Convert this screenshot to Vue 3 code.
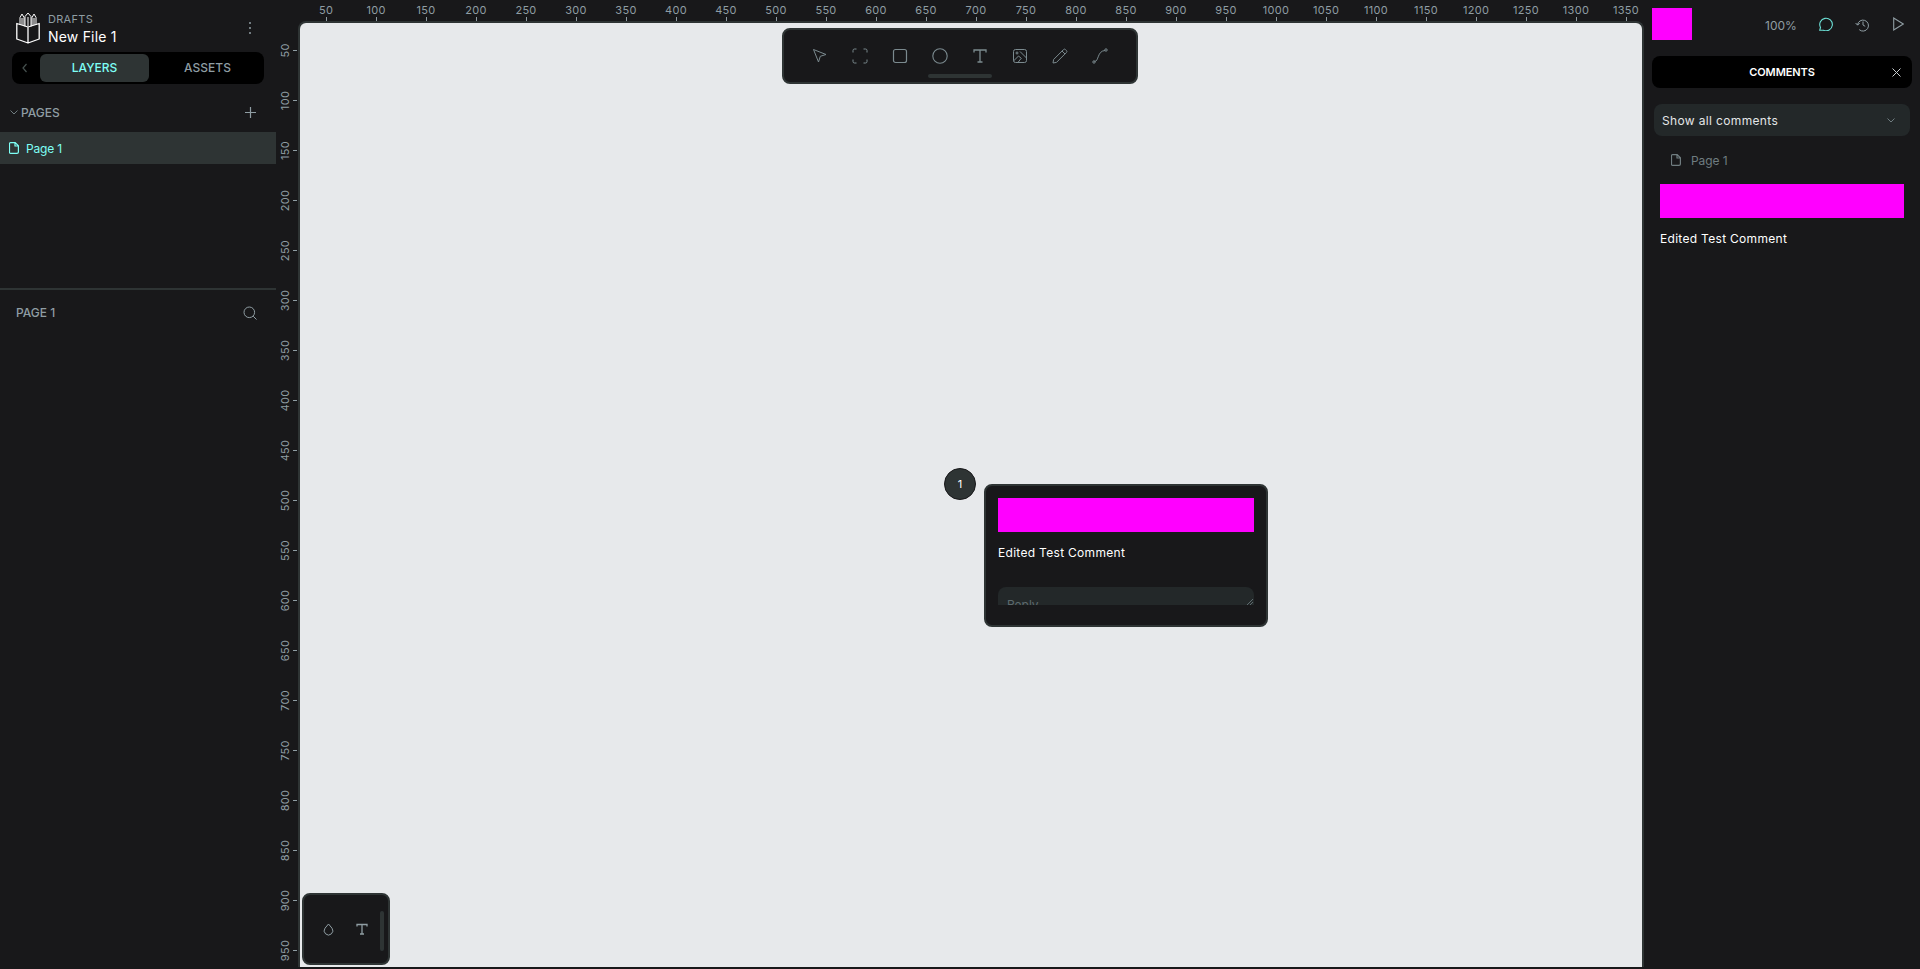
<script setup>
const hTicks = Array.from({ length: 27 }, (_, i) => (i + 1) * 50)
const vTicks = Array.from({ length: 19 }, (_, i) => (i + 1) * 50)
</script>

<template>
  <div class="app">
    <aside class="left">
      <header class="file">
        <svg class="logo" viewBox="0 0 24 32" fill="none" stroke="#fff" stroke-width="1.3" stroke-linejoin="round">
          <path d="M.8 11.500 12 15l11.200-3.500v15.500L12 31 .8 27zM12 15v16" />
          <path d="M4 13V5.500l2-3.500 2 3.500V14M9 14.500V4.500L12 1l3 3.500v10M16 14V5.500L18 2l2 3.500V13M6 6v7M12 5v9M18 6v7" stroke-width="1" />
        </svg>
        <div class="file-text">
          <div class="drafts">DRAFTS</div>
          <div class="name">New File 1</div>
        </div>
        <svg class="dots" width="4" height="14" viewBox="0 0 4 14" fill="#8f9da3">
          <circle cx="2" cy="2" r="1" /><circle cx="2" cy="7" r="1" /><circle cx="2" cy="12" r="1" />
        </svg>
      </header>
      <div class="tabs">
        <svg class="back" width="6" height="10" viewBox="0 0 6 10" fill="none" stroke="#46514f" stroke-width="1.2"><path d="M4.500 1 1 5l3.500 4" /></svg>
        <div class="tab active">LAYERS</div>
        <div class="tab assets">ASSETS</div>
      </div>
      <div class="pages-head">
        <svg width="8" height="5" viewBox="0 0 8 5" fill="none" stroke="#6f7c80"><path d="M.5.500 4 4 7.500.500" /></svg>
        <span>PAGES</span>
        <svg class="plus" width="11" height="11" viewBox="0 0 11 11" fill="none" stroke="#8f9da3" stroke-width="1.200"><path d="M5.500 0v11M0 5.500h11" /></svg>
      </div>
      <div class="page-row">
        <svg width="10" height="12" viewBox="0 0 10 12" fill="none" stroke="currentColor" stroke-width="1.200"><path d="M1.500.600h4.700l3.200 3.200v6.200a1.400 1.400 0 0 1-1.400 1.400H1.500a1 1 0 0 1-1-1V1.600a1 1 0 0 1 1-1ZM6 .600v3.400h3.400" /></svg>
        <span>Page 1</span>
      </div>
      <div class="pages-space"></div>
      <div class="layers-head">
        <span>PAGE 1</span>
        <svg width="14" height="14" viewBox="0 0 14 14" fill="none" stroke="#8f9da3"><circle cx="6.300" cy="6.300" r="5.300" /><path d="m10.200 10.200 3.300 3.300" /></svg>
      </div>
    </aside>

    <main class="stage">
      <div class="ruler-top">
        <div v-for="t in hTicks" :key="t" class="h-tick" :style="{ left: t + 'px' }">
          <span>{{ t }}</span><i></i>
        </div>
      </div>
      <div class="stage-body">
        <div class="ruler-left">
          <div v-for="t in vTicks" :key="t" class="v-tick" :style="{ top: t + 'px' }">
            <span>{{ t }}</span><i></i>
          </div>
        </div>
        <div class="canvas">
          <div class="toolbar">
            <svg viewBox="0 0 16 16" fill="none" stroke="currentColor"><path d="M1.500 1.500 14 6.500 8.300 8.300 6.500 14z" /></svg>
            <svg viewBox="0 0 16 16" fill="none" stroke="currentColor"><path d="M1 4.500V2.500A1.500 1.500 0 0 1 2.500 1h2M11.500 1h2A1.500 1.500 0 0 1 15 2.500v2M15 11.500v2a1.500 1.500 0 0 1-1.500 1.500h-2M4.500 15h-2A1.500 1.500 0 0 1 1 13.500v-2" /></svg>
            <svg viewBox="0 0 16 16" fill="none" stroke="currentColor" stroke-width="1.200"><rect x="1.500" y="1.500" width="13" height="13" rx="2" /></svg>
            <svg viewBox="0 0 16 16" fill="none" stroke="currentColor" stroke-width="1.100"><circle cx="8" cy="8" r="7.200" /></svg>
            <svg viewBox="0 0 16 16" fill="none" stroke="currentColor" stroke-width="1.300"><path d="M2 4.500V2h12v2.500M8 2v12M5.500 14h5" /></svg>
            <svg viewBox="0 0 16 16" fill="none" stroke="currentColor"><rect x="1.500" y="1.500" width="13" height="13" rx="2" /><circle cx="5" cy="5" r="1" /><path d="m1.500 13 5-5 3 2.500M8 3.500l6.500 6.500M6 14.500l3-4" /></svg>
            <svg viewBox="0 0 16 16" fill="none" stroke="currentColor"><path d="M1 15l.6-3.500L11.500 1.600a1.400 1.400 0 0 1 2 0l.9.900a1.400 1.400 0 0 1 0 2L4.500 14.400zM10 3l3 3" /></svg>
            <svg viewBox="0 0 16 16" fill="none" stroke="currentColor"><path d="M2.500 13.500C7 13.500 5 3 13 2.500" /><circle cx="2" cy="14" r="1.200" /><circle cx="14" cy="2" r="1.200" /></svg>
            <div class="handle"></div>
          </div>

          <div class="pin">1</div>
          <div class="popover">
            <div class="bar"></div>
            <p class="comment">Edited Test Comment</p>
            <div class="reply">
              <span>Reply</span>
              <svg class="grip" width="6" height="6" viewBox="0 0 6 6" fill="none" stroke="#5d6a6e"><path d="M6 0 0 6M6 3 3 6" /></svg>
            </div>
          </div>

          <div class="dock">
            <svg width="11" height="13" viewBox="0 0 11 13" fill="none" stroke="#8f9da3"><path d="M5.500 1 9 5.200a4.300 4.300 0 1 1-7 0z" /></svg>
            <svg width="12" height="12" viewBox="0 0 12 12" fill="none" stroke="#8f9da3" stroke-width="1.300"><path d="M1 3.500V1.500h10v2M6 1.500V11M4 11h4" /></svg>
            <div class="dock-scroll"></div>
          </div>
        </div>
      </div>
    </main>

    <aside class="right">
      <div class="top">
        <div class="avatar"></div>
        <span class="zoom">100%</span>
        <svg class="i-comment" width="14" height="14" viewBox="0 0 14 14" fill="none" stroke="#6ce0d6" stroke-width="1.100"><path d="M.7 13.300h3.800a6.300 6.300 0 1 0-3-2.800z" /></svg>
        <svg class="i-history" width="14" height="14" viewBox="0 0 14 14" fill="none" stroke="#8f9da3" stroke-width="1"><path d="M2.500 7a5.500 5.500 0 1 1 1.700 4.600M.6 5l2 2.200L4.700 5M8 3.500V7l2.200 1.300" /></svg>
        <svg class="i-play" width="11" height="14" viewBox="0 0 11 14" fill="none" stroke="#8f9da3" stroke-width="1.100"><path d="M.7 1v12l9.600-6z" /></svg>
      </div>
      <div class="comments-head">
        <span>COMMENTS</span>
        <svg width="9" height="9" viewBox="0 0 9 9" fill="none" stroke="#c9cfd1"><path d="m.5.500 8 8M8.500.500l-8 8" /></svg>
      </div>
      <div class="select">
        <span>Show all comments</span>
        <svg width="8" height="5" viewBox="0 0 8 5" fill="none" stroke="#6f7c80"><path d="M.5.500 4 4 7.500.500" /></svg>
      </div>
      <div class="thread-page">
        <svg width="10" height="12" viewBox="0 0 10 12" fill="none" stroke="currentColor" stroke-width="1.200"><path d="M1.500.600h4.700l3.200 3.200v6.200a1.400 1.400 0 0 1-1.400 1.400H1.500a1 1 0 0 1-1-1V1.600a1 1 0 0 1 1-1ZM6 .600v3.400h3.400" /></svg>
        <span>Page 1</span>
      </div>
      <div class="bar side-bar"></div>
      <p class="comment side-comment">Edited Test Comment</p>
    </aside>
  </div>
</template>

<style scoped>
.app {
  display: flex;
  width: 1920px;
  height: 969px;
  overflow: hidden;
  background: #18181a;
  font-family: Inter, "Liberation Sans", sans-serif;
  color: #8f9da3;
}
.left, .right { flex: 0 0 276px; width: 276px; min-width: 0; display: flex; flex-direction: column; }
.file { display: flex; align-items: flex-start; height: 52px; padding: 12px 0 0 16px; box-sizing: border-box; }
.logo { width: 24px; height: 32px; flex: none; }
.file-text { margin-left: 8px; flex: 1; }
.drafts { font-size: 11px; letter-spacing: .3px; line-height: 14px; }
.name { font-size: 14px; letter-spacing: .2px; line-height: 20px; color: #fff; margin-top: 1px; }
.dots { margin: 9px 24px 0 0; }
.tabs { display: flex; align-items: center; margin: 0 12px; height: 32px; background: #000; border-radius: 8px; padding: 2px 0 2px 10px; box-sizing: border-box; }
.back { margin-right: 12px; flex: none; }
.tab { flex: 1; height: 28px; line-height: 28px; text-align: center; font-size: 12px; font-weight: 500; border-radius: 6px; }
.tab.active { flex: 0 0 109px; background: #2e3434; color: #7efff5; }
.tab.assets { padding-left: 2px; }
.pages-head { display: flex; align-items: center; height: 24px; margin-top: 16px; padding: 0 20px 0 10px; font-size: 12px; font-weight: 500; }
.pages-head span { margin-left: 3px; flex: 1; }
.page-row { display: flex; align-items: center; gap: 7px; height: 32px; margin-top: 8px; padding-left: 9px; background: #2e3434; color: #7efff5; font-size: 12px; letter-spacing: -.2px; }
.pages-space { height: 124px; border-bottom: 2px solid #2e3434; }
.layers-head { display: flex; align-items: center; justify-content: space-between; padding: 15px 19px 0 16px; font-size: 12px; font-weight: 500; }

.stage { flex: 1; display: flex; flex-direction: column; min-width: 0; }
.ruler-top { position: relative; height: 21px; flex: none; }
.h-tick { position: absolute; top: 5px; width: 0; display: flex; flex-direction: column; align-items: center; }
.h-tick span { font-size: 11px; letter-spacing: .3px; line-height: 11px; }
.h-tick i { width: 1px; height: 4px; margin-top: 1px; background: #8f9da3; }
.stage-body { flex: 1; display: flex; min-height: 0; padding-bottom: 2px; }
.ruler-left { position: relative; flex: 0 0 22px; margin-top: -21px; }
.v-tick { position: absolute; left: 0; width: 22px; height: 0; display: flex; align-items: center; justify-content: flex-end; }
.v-tick span { font-size: 11px; letter-spacing: .3px; line-height: 11px; transform: rotate(-90deg); width: 11px; flex: none; display: flex; justify-content: center; margin-right: 2px; }
.v-tick i { width: 4px; height: 1px; background: #8f9da3; flex: none; margin-right: 1px; }
.canvas { position: relative; flex: 1; background: #e7e9eb; border: 2px solid #2e3434; border-bottom: 0; border-radius: 8px 8px 0 0; box-sizing: border-box; }

.toolbar { position: absolute; left: 482px; top: 5px; width: 356px; height: 56px; box-sizing: border-box; display: flex; align-items: center; justify-content: center; gap: 24px; background: #18181a; border: 2px solid #2e3434; border-radius: 8px; color: #7b8a8f; }
.toolbar svg { width: 16px; height: 16px; flex: none; }
.handle { position: absolute; left: 144px; bottom: 4px; width: 64px; height: 4px; border-radius: 2px; background: #2e3434; }

.pin { position: absolute; left: 644px; top: 445px; width: 32px; height: 32px; box-sizing: border-box; border: 1px solid #18181a; border-radius: 50%; background: #2e3434; color: #fff; font-size: 11px; line-height: 30px; text-align: center; }
.popover { position: absolute; left: 684px; top: 461px; width: 284px; height: 143px; box-sizing: border-box; padding: 12px; background: #18181a; border: 2px solid #2e3434; border-radius: 8px; }
.bar { background: #f0f; height: 34px; }
.comment { margin: 0; color: #fff; font-size: 12px; letter-spacing: .3px; line-height: 16px; }
.popover .comment { margin-top: 13px; }
.reply { position: relative; margin-top: 26px; height: 18px; overflow: hidden; border-radius: 8px 8px 0 0; background: #232829; padding: 11px 0 0 9px; box-sizing: border-box; font-size: 12px; line-height: 14px; color: #5d6a6e; }
.grip { position: absolute; right: 1px; bottom: 0; }

.dock { position: absolute; left: 2px; bottom: 2px; width: 88px; height: 72px; box-sizing: border-box; display: flex; align-items: center; gap: 22px; padding-left: 19px; background: #18181a; border: 2px solid #2e3434; border-radius: 8px; }
.dock-scroll { position: absolute; right: 4px; top: 16px; width: 4px; height: 40px; border-radius: 2px; background: #2e3434; }

.top { display: flex; align-items: flex-start; height: 48px; padding: 8px 0 0 8px; box-sizing: border-box; }
.avatar { width: 40px; height: 32px; background: #f0f; flex: none; }
.zoom { margin: 11px 0 0 73px; font-size: 12px; line-height: 14px; width: 30px; white-space: nowrap; }
.i-comment { margin: 9px 0 0 24px; }
.i-history { margin: 10px 0 0 22px; }
.i-play { margin: 9px 0 0 24px; }
.comments-head { position: relative; height: 32px; margin: 8px 8px 0; background: #000; border-radius: 8px; display: flex; align-items: center; justify-content: center; color: #fff; font-size: 11px; letter-spacing: -.1px; font-weight: 600; }
.comments-head svg { position: absolute; right: 11px; top: 12px; }
.select { display: flex; align-items: center; justify-content: space-between; height: 32px; margin: 16px 10px 0; padding: 0 15px 0 8px; background: #232829; border-radius: 8px; font-size: 12px; letter-spacing: .35px; color: #e3e6e7; }
.thread-page { display: flex; align-items: center; gap: 10px; height: 24px; margin-top: 12px; padding-left: 27px; font-size: 12px; letter-spacing: -.1px; color: #6f7c80; }
.side-bar { margin: 12px 16px 0; }
.side-comment { margin: 13px 16px 0; }
</style>
